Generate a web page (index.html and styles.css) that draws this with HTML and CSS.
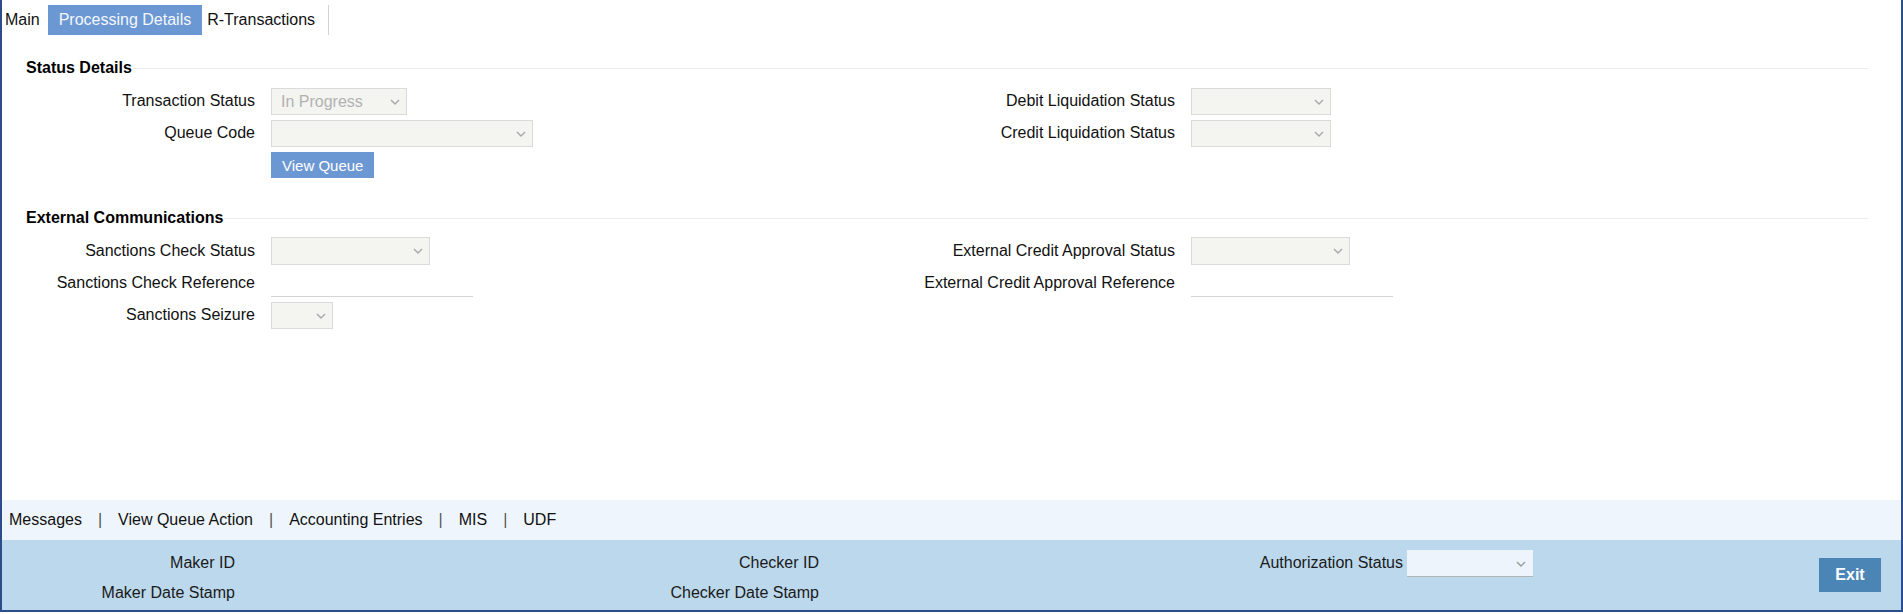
FILE: index.html
```html
<!DOCTYPE html>
<html lang="en">
<head>
    <meta charset="UTF-8">
    <meta name="viewport" content="width=device-width, initial-scale=1.0">
    <title>Processing Details</title>
    <link rel="stylesheet" href="styles.css">
</head>
<body>

    <div class="frame">

        <!-- Tab strip -->
        <ul class="tabs">
            <li class="tab">Main</li>
            <li class="tab active">Processing Details</li>
            <li class="tab">R-Transactions</li>
        </ul>

        <div class="content">

            <div class="section">
                <h3 class="section-title">Status Details</h3>
                <div class="fields">
                    <div class="col">
                        <div class="row">
                            <label>Transaction Status</label>
                            <span class="select sel-status">
                                <select disabled><option>In Progress</option></select>
                                <svg class="chev" width="10" height="6" viewBox="0 0 10 6"><polyline points="1,1 5,5 9,1"/></svg>
                            </span>
                        </div>
                        <div class="row">
                            <label>Queue Code</label>
                            <span class="select sel-queue">
                                <select disabled><option></option></select>
                                <svg class="chev" width="10" height="6" viewBox="0 0 10 6"><polyline points="1,1 5,5 9,1"/></svg>
                            </span>
                        </div>
                        <div class="row">
                            <label></label>
                            <button class="btn">View Queue</button>
                        </div>
                    </div>
                    <div class="col">
                        <div class="row">
                            <label>Debit Liquidation Status</label>
                            <span class="select sel-liq">
                                <select disabled><option></option></select>
                                <svg class="chev" width="10" height="6" viewBox="0 0 10 6"><polyline points="1,1 5,5 9,1"/></svg>
                            </span>
                        </div>
                        <div class="row">
                            <label>Credit Liquidation Status</label>
                            <span class="select sel-liq">
                                <select disabled><option></option></select>
                                <svg class="chev" width="10" height="6" viewBox="0 0 10 6"><polyline points="1,1 5,5 9,1"/></svg>
                            </span>
                        </div>
                    </div>
                </div>
            </div>

            <div class="section section-ext">
                <h3 class="section-title">External Communications</h3>
                <div class="fields">
                    <div class="col">
                        <div class="row">
                            <label>Sanctions Check Status</label>
                            <span class="select sel-check">
                                <select disabled><option></option></select>
                                <svg class="chev" width="10" height="6" viewBox="0 0 10 6"><polyline points="1,1 5,5 9,1"/></svg>
                            </span>
                        </div>
                        <div class="row">
                            <label>Sanctions Check Reference</label>
                            <input type="text" class="text-input">
                        </div>
                        <div class="row">
                            <label>Sanctions Seizure</label>
                            <span class="select sel-seizure">
                                <select disabled><option></option></select>
                                <svg class="chev" width="10" height="6" viewBox="0 0 10 6"><polyline points="1,1 5,5 9,1"/></svg>
                            </span>
                        </div>
                    </div>
                    <div class="col">
                        <div class="row">
                            <label>External Credit Approval Status</label>
                            <span class="select sel-check">
                                <select disabled><option></option></select>
                                <svg class="chev" width="10" height="6" viewBox="0 0 10 6"><polyline points="1,1 5,5 9,1"/></svg>
                            </span>
                        </div>
                        <div class="row">
                            <label>External Credit Approval Reference</label>
                            <input type="text" class="text-input">
                        </div>
                    </div>
                </div>
            </div>

        </div>

        <!-- Sub-screen links -->
        <div class="nav-bar">
            <a href="#">Messages</a>
            <span class="sep">|</span>
            <a href="#">View Queue Action</a>
            <span class="sep">|</span>
            <a href="#">Accounting Entries</a>
            <span class="sep">|</span>
            <a href="#">MIS</a>
            <span class="sep">|</span>
            <a href="#">UDF</a>
        </div>

        <!-- Audit footer -->
        <div class="audit">
            <div class="audit-col">
                <div class="audit-row"><label>Maker ID</label></div>
                <div class="audit-row"><label>Maker Date Stamp</label></div>
            </div>
            <div class="audit-col">
                <div class="audit-row"><label>Checker ID</label></div>
                <div class="audit-row"><label>Checker Date Stamp</label></div>
            </div>
            <div class="audit-col">
                <div class="audit-row">
                    <label>Authorization Status</label>
                    <span class="select sel-auth">
                        <select disabled><option></option></select>
                        <svg class="chev" width="10" height="6" viewBox="0 0 10 6"><polyline points="1,1 5,5 9,1"/></svg>
                    </span>
                </div>
                <div class="audit-row"></div>
            </div>
            <button class="btn-exit">Exit</button>
        </div>

    </div>

</body>
</html>
```

FILE: styles.css
```css
* {
    margin: 0;
    padding: 0;
    box-sizing: border-box;
}

body {
    font-family: 'Liberation Sans', Arial, sans-serif;
    font-size: 16px;
    line-height: 18px;
    color: #111;
    background: #fff;
}

.frame {
    height: 612px;
    border: 2px solid #2c4c8c;
    border-top: none;
    display: flex;
    flex-direction: column;
}

/* Tabs */
.tabs {
    display: flex;
    list-style: none;
    padding-top: 5px;
}

.tab {
    height: 30px;
    line-height: 30px;
    padding: 0 5px;
    color: #111;
    cursor: pointer;
}

.tab:first-child {
    padding: 0 8px 0 3px;
}

.tab.active {
    background-color: #6b97d3;
    color: #f4f7fc;
    padding: 0 11px;
}

.tab:last-child {
    padding-right: 13px;
    border-right: 1px solid #d2d2d2;
}

/* Form sections */
.content {
    flex: 1;
}

.section {
    margin: 24px 33px 0 24px;
}

.section-ext {
    margin-top: 30px;
}

.section-title {
    display: flex;
    align-items: center;
    font-size: 16px;
    font-weight: bold;
    line-height: 18px;
    color: #000;
    margin-bottom: 10px;
}

.section-title::after {
    content: "";
    flex: 1;
    border-top: 1px solid #ebebeb;
    margin-left: 1px;
}

.fields {
    display: flex;
}

.col {
    width: 920px;
    display: flex;
    flex-direction: column;
    gap: 4px;
}

.row {
    display: flex;
    align-items: center;
    height: 28px;
}

/* labels are right aligned and may run out to the left */
.row label {
    flex: none;
    width: 229px;
    margin-right: 16px;
    display: flex;
    justify-content: flex-end;
    white-space: nowrap;
    color: #111;
}

.select {
    position: relative;
    display: inline-block;
    height: 27px;
}

.select select {
    appearance: none;
    -webkit-appearance: none;
    width: 100%;
    height: 100%;
    background-color: #f4f4f1;
    border: 1px solid #dadada;
    border-radius: 0;
    padding: 0 20px 0 9px;
    font-family: inherit;
    font-size: 16px;
    color: #b2b2b2;
    opacity: 1;
}

.chev {
    position: absolute;
    right: 7px;
    top: 11px;
    pointer-events: none;
}

.chev polyline {
    fill: none;
    stroke: #a8a8a8;
    stroke-width: 1.4;
}

.sel-status { width: 136px; }
.sel-queue { width: 262px; }
.sel-liq { width: 140px; }
.sel-check { width: 159px; height: 28px; }
.sel-seizure { width: 62px; }
.sel-auth { width: 126px; }

.text-input {
    width: 202px;
    height: 27px;
    border: none;
    border-bottom: 1px solid #d4d4d4;
    background: transparent;
    font-family: inherit;
    font-size: 16px;
    padding: 0 6px;
    outline: none;
}

.btn {
    height: 26px;
    background-color: #6b97d3;
    border: none;
    color: #fff;
    font-family: inherit;
    font-size: 15px;
    padding: 0 11px;
    cursor: pointer;
}

/* Bottom link bar */
.nav-bar {
    height: 40px;
    background-color: #eef5fc;
    display: flex;
    align-items: center;
    gap: 16px;
    padding-left: 7px;
}

.nav-bar a {
    color: #111;
    text-decoration: none;
}

.nav-bar .sep {
    color: #555;
}

/* Audit footer */
.audit {
    height: 70px;
    background-color: #bcd8ec;
    display: flex;
    padding: 9px 20px 3px 0;
}

.audit-col {
    width: 584px;
    display: flex;
    flex-direction: column;
    gap: 2px;
}

.audit-row {
    display: flex;
    align-items: center;
    height: 28px;
}

.audit-row label {
    width: 233px;
    text-align: right;
    color: #1a1a1a;
}

.sel-auth {
    margin-left: 4px;
}

.sel-auth select {
    background-color: #edf4fb;
    border: none;
    border-bottom: 1px solid #b4b4b4;
}

.sel-auth .chev polyline {
    stroke: #9a9a9a;
}

.btn-exit {
    margin: 9px 0 0 auto;
    width: 62px;
    height: 34px;
    background-color: #4b85b6;
    border: none;
    color: #fff;
    font-family: inherit;
    font-size: 16px;
    font-weight: bold;
    cursor: pointer;
}
```
